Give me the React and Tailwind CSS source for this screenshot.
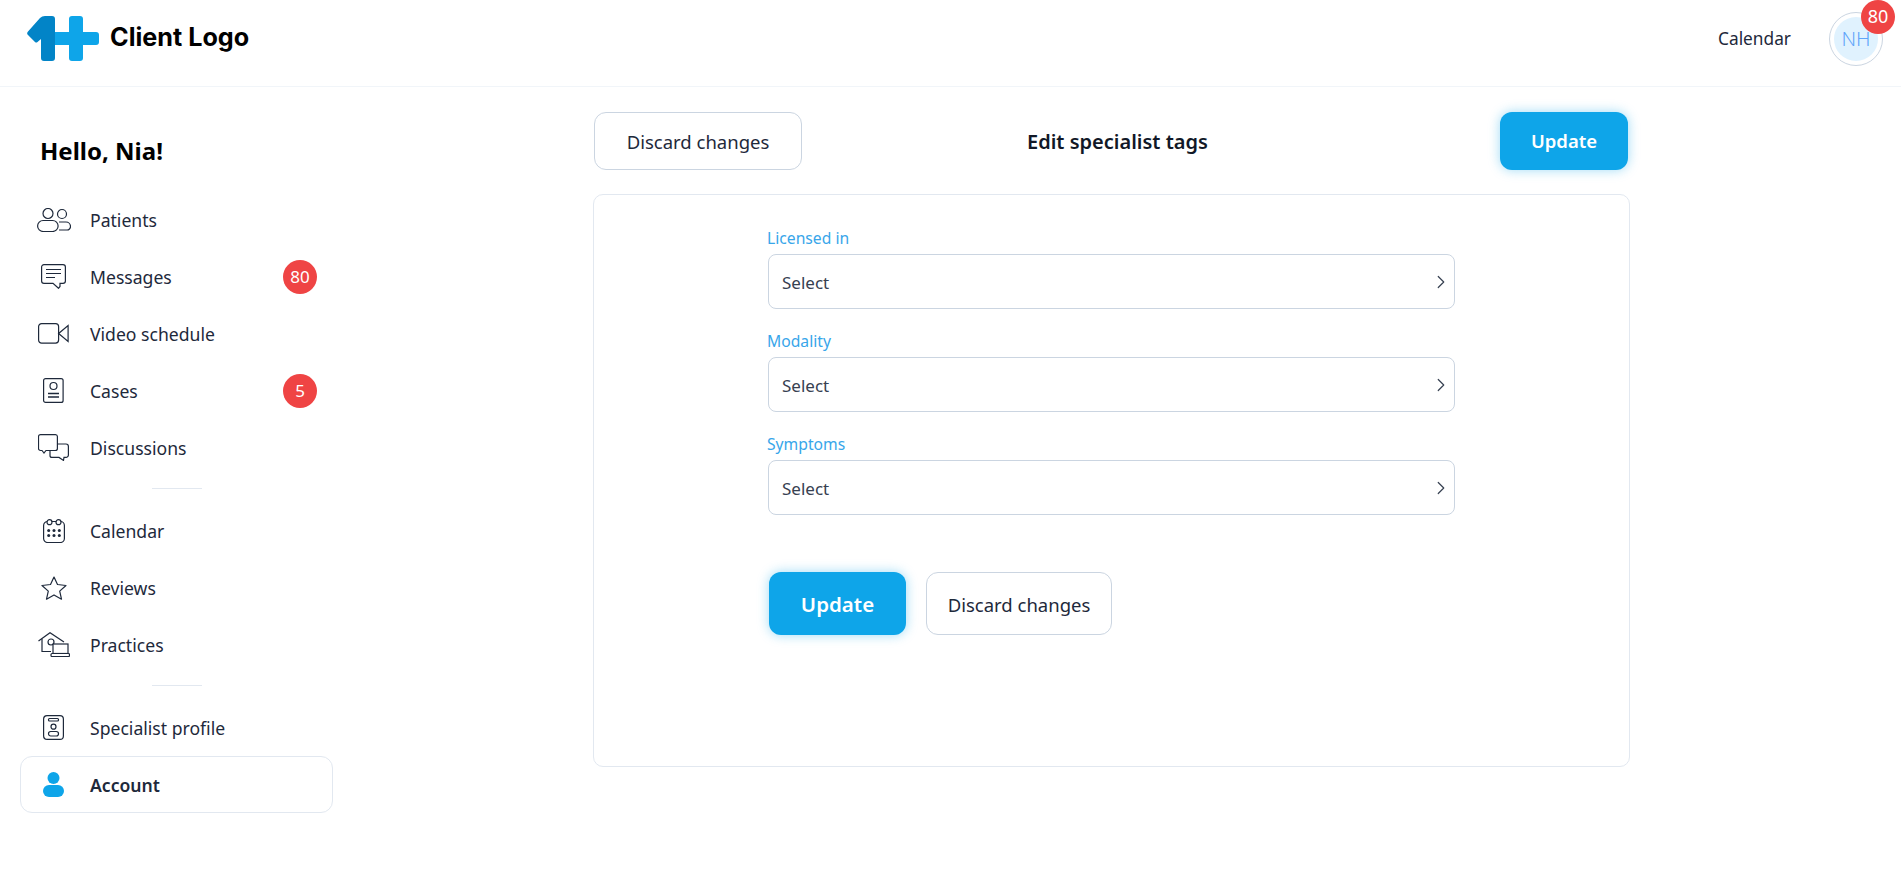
import { ChevronRight } from 'lucide-react'

const ink = '#1e293b'

function Logo() {
  return (
    <svg width="72" height="45" viewBox="0 0 72 45" fill="none">
      <path d="M28 16H42V3a3 3 0 0 1 3-3h8a3 3 0 0 1 3 3V16H69a3 3 0 0 1 3 3v7a3 3 0 0 1-3 3H56V42a3 3 0 0 1-3 3h-8a3 3 0 0 1-3-3V29H28z" fill="#0ea5e9" />
      <path d="M1 15.500 13 2q2-2 5-2h7a3 3 0 0 1 3 3V42a3 3 0 0 1-3 3H17a3 3 0 0 1-3-3V23l-3.500 3a2 2 0 0 1-2.500 0L1 19a2.500 2.500 0 0 1 0-3.500z" fill="#0284c7" />
    </svg>
  )
}

function PatientsIcon() {
  return (
    <svg width="34" height="24" viewBox="0 0 34 24" fill="none" stroke={ink} strokeWidth="1.2">
      <circle cx="11" cy="5.500" r="5" />
      <rect x="0.600" y="12.500" width="20.500" height="11" rx="5.500" />
      <circle cx="25" cy="6" r="4.500" />
      <path d="M22 14h7a4.500 4.500 0 0 1 4.500 4.500 3.500 3.500 0 0 1-3.500 3.500h-8" />
    </svg>
  )
}

function MessagesIcon() {
  return (
    <svg width="25" height="25" viewBox="0 0 25 25" fill="none" stroke={ink} strokeWidth="1.2">
      <path d="M3 .6h19A2.400 2.400 0 0 1 24.400 3v14a2.400 2.400 0 0 1-2.400 2.400h-3v3.100l-1.500 1.800-5.500-4.900H3A2.400 2.400 0 0 1 .6 17V3A2.400 2.400 0 0 1 3 .6z" />
      <path d="M5 5.500h15M5 9.500h15M5 13.500h9" />
    </svg>
  )
}

function VideoIcon() {
  return (
    <svg width="31" height="21" viewBox="0 0 31 21" fill="none" stroke={ink} strokeWidth="1.2">
      <rect x="0.600" y="0.600" width="20" height="19.500" rx="3" />
      <path d="M20.600 10.500l9.500-8v16z" />
    </svg>
  )
}

function CasesIcon() {
  return (
    <svg width="21" height="25" viewBox="0 0 21 25" fill="none" stroke={ink} strokeWidth="1.2">
      <rect x="0.600" y="0.600" width="19.500" height="23.800" rx="2" />
      <circle cx="10.500" cy="8" r="3.500" />
      <path d="M5 15.500h11M5 19h11" strokeWidth="1.400" />
    </svg>
  )
}

function DiscussionsIcon() {
  return (
    <svg width="31" height="27" viewBox="0 0 31 27" fill="none" stroke={ink} strokeWidth="1.2">
      <path d="M2.500.6h15A2 2 0 0 1 19.400 2.500v12a2 2 0 0 1-2 2H8l-2 2.500-2-2.500H2.500a2 2 0 0 1-2-2v-12A2 2 0 0 1 2.500.6z" />
      <path d="M19.400 10H28a2.400 2.400 0 0 1 2.400 2.400V21a2.400 2.400 0 0 1-2.400 2.400h-2l-.5 3-4.500-3H14a2 2 0 0 1-2-2v-5" />
    </svg>
  )
}

function CalendarIcon() {
  return (
    <svg width="22" height="24" viewBox="0 0 22 24" fill="none" stroke={ink} strokeWidth="1.2">
      <rect x="0.600" y="2.500" width="20.800" height="21" rx="4" />
      <circle cx="6.500" cy="3.200" r="2.500" fill="#fff" />
      <circle cx="15.500" cy="3.200" r="2.500" fill="#fff" />
      <g fill={ink} stroke="none">
        <circle cx="5.700" cy="11.500" r="1.500" /><circle cx="11" cy="11.500" r="1.500" /><circle cx="16.300" cy="11.500" r="1.500" />
        <circle cx="5.700" cy="16.500" r="1.500" /><circle cx="11" cy="16.500" r="1.500" /><circle cx="16.300" cy="16.500" r="1.500" />
      </g>
    </svg>
  )
}

function StarIcon() {
  return (
    <svg width="26" height="24" viewBox="0 0 26 24" fill="none" stroke={ink} strokeWidth="1.2">
      <path d="M13 1l3.500 7.500 8.500 1-6.300 5.600 1.800 8.100-7.500-4.300-7.500 4.300 1.800-8.100L1 9.500l8.500-1z" strokeLinejoin="round" />
    </svg>
  )
}

function PracticesIcon() {
  return (
    <svg width="32" height="25" viewBox="0 0 32 25" fill="none" stroke={ink} strokeWidth="1.2">
      <path d="M.5 9 12 .7 26 10" />
      <path d="M4 7v12.500h9" />
      <circle cx="13" cy="10" r="3" />
      <rect x="15" y="12" width="15" height="9.500" fill="#fff" />
      <rect x="13" y="21.500" width="18.500" height="3" rx="1" fill="#fff" />
    </svg>
  )
}

function ProfileIcon() {
  return (
    <svg width="21" height="25" viewBox="0 0 21 25" fill="none" stroke={ink} strokeWidth="1.2">
      <rect x="0.600" y="0.600" width="19.800" height="23.800" rx="3.500" />
      <rect x="5.500" y="3.500" width="10" height="2.500" rx="1" />
      <circle cx="10.500" cy="11.700" r="2.500" />
      <rect x="5.500" y="16.500" width="10" height="4.500" rx="2.200" />
    </svg>
  )
}

function AccountIcon() {
  return (
    <svg width="21" height="25" viewBox="0 0 21 25" fill="#0ea5e9">
      <circle cx="10.500" cy="6" r="6" />
      <rect x="0" y="13" width="21" height="12" rx="6" />
    </svg>
  )
}

const groups = [
  [
    { label: 'Patients', icon: <PatientsIcon /> },
    { label: 'Messages', icon: <MessagesIcon />, badge: '80' },
    { label: 'Video schedule', icon: <VideoIcon /> },
    { label: 'Cases', icon: <CasesIcon />, badge: '5' },
    { label: 'Discussions', icon: <DiscussionsIcon /> },
  ],
  [
    { label: 'Calendar', icon: <CalendarIcon /> },
    { label: 'Reviews', icon: <StarIcon /> },
    { label: 'Practices', icon: <PracticesIcon /> },
  ],
  [
    { label: 'Specialist profile', icon: <ProfileIcon /> },
    { label: 'Account', icon: <AccountIcon />, active: true },
  ],
]

function NavRow({ item }) {
  return (
    <a
      className={`flex h-[57px] items-center rounded-xl border pr-[15px] text-[17.6px] text-[#1e293b] ${
        item.active ? 'border-[#e2e8f0] font-semibold' : 'border-transparent'
      }`}
    >
      <span className="mr-[4px] flex w-[65px] shrink-0 justify-center">{item.icon}</span>
      <span className="flex-1 pt-[1px]">{item.label}</span>
      {item.badge && (
        <span className="flex h-[34px] w-[34px] items-center justify-center rounded-full bg-[#ef4444] text-[17px] text-white">
          {item.badge}
        </span>
      )}
    </a>
  )
}

function Field({ label }) {
  return (
    <div>
      <label className="-ml-[1px] block text-[15.700px] leading-[22px] text-[#38a6ea]">{label}</label>
      <button
        type="button"
        className="mt-[5px] flex h-[55px] w-full items-center justify-between rounded-lg border border-[#cbd5e1] bg-white pl-[13px] pr-[2px] text-[17px] text-[#374151]"
      >
        <span className="pt-[2px]">Select</span>
        <ChevronRight size={22} strokeWidth={1.3} />
      </button>
    </div>
  )
}

export default function App() {
  return (
    <div className="min-h-[875px] bg-white font-['Noto_Sans',sans-serif] text-[#1e293b]">
      <header className="flex h-[87px] items-center justify-between border-b border-[#f1f5f9] pl-[27px] pr-[18px]">
        <div className="flex items-center gap-[11px] pb-[10px]">
          <Logo />
          <span className="font-['Inter',sans-serif] text-[25.200px] font-bold text-black">Client Logo</span>
        </div>
        <div className="flex items-center gap-[38px] pb-[9px]">
          <a className="pt-[1px] text-[17.300px]">Calendar</a>
          <div className="relative flex h-[54px] w-[54px] items-center justify-center rounded-full border border-[#cbd5e1] bg-white p-[4px]">
            <div className="flex h-full w-full items-center justify-center rounded-full bg-[#e0f2fe] text-[20px] font-light text-[#60a5fa]">
              NH
            </div>
            <span className="absolute -right-[13px] -top-[13px] flex h-[34px] w-[34px] items-center justify-center rounded-full bg-[#ef4444] text-[18px] text-white">
              80
            </span>
          </div>
        </div>
      </header>

      <div className="flex">
        <aside className="w-[593px] shrink-0 pl-[20px]">
          <div className="w-[313px]">
            <h2 className="pl-[20px] pt-[46px] text-[24px] font-bold leading-[36px] text-black">Hello, Nia!</h2>
            <div className="mt-[22px]">
              {groups.map((items, i) => (
                <div key={i}>
                  {i > 0 && <div className="mx-auto mb-[13px] mt-[12px] h-px w-[50px] bg-[#e2e8f0]" />}
                  {items.map((item) => (
                    <NavRow key={item.label} item={item} />
                  ))}
                </div>
              ))}
            </div>
          </div>
        </aside>

        <main className="w-[1037px] pt-[25px]">
          <div className="flex h-[58px] items-center">
            <button
              type="button"
              className="ml-[1px] h-[58px] w-[208px] rounded-xl border border-[#cbd5e1] bg-white pt-[2px] text-[18.500px]"
            >
              Discard changes
            </button>
            <h1 className="ml-[225px] pt-[1px] text-[20px] font-semibold text-[#111827]">Edit specialist tags</h1>
            <button
              type="button"
              className="ml-auto mr-[2px] h-[58px] w-[128px] rounded-xl bg-[#0ea5e9] text-[18.500px] font-semibold text-white shadow-[0_0_12px_rgba(14,165,233,0.4)]"
            >
              Update
            </button>
          </div>

          <section className="mt-[24px] h-[573px] rounded-[10px] border border-[#e2e8f0] pl-[174px] pr-[174px] pt-[32px]">
            <div className="flex flex-col gap-[21px]">
              <Field label="Licensed in" />
              <Field label="Modality" />
              <Field label="Symptoms" />
            </div>
            <div className="mt-[57px] flex gap-[20px] pl-[1px]">
              <button
                type="button"
                className="h-[63px] w-[137px] rounded-xl bg-[#0ea5e9] pt-[2px] text-[20.500px] font-semibold text-white shadow-[0_0_12px_rgba(14,165,233,0.4)]"
              >
                Update
              </button>
              <button
                type="button"
                className="h-[63px] w-[186px] rounded-xl border border-[#cbd5e1] bg-white pt-[2px] text-[18.500px]"
              >
                Discard changes
              </button>
            </div>
          </section>
        </main>
      </div>
    </div>
  )
}
